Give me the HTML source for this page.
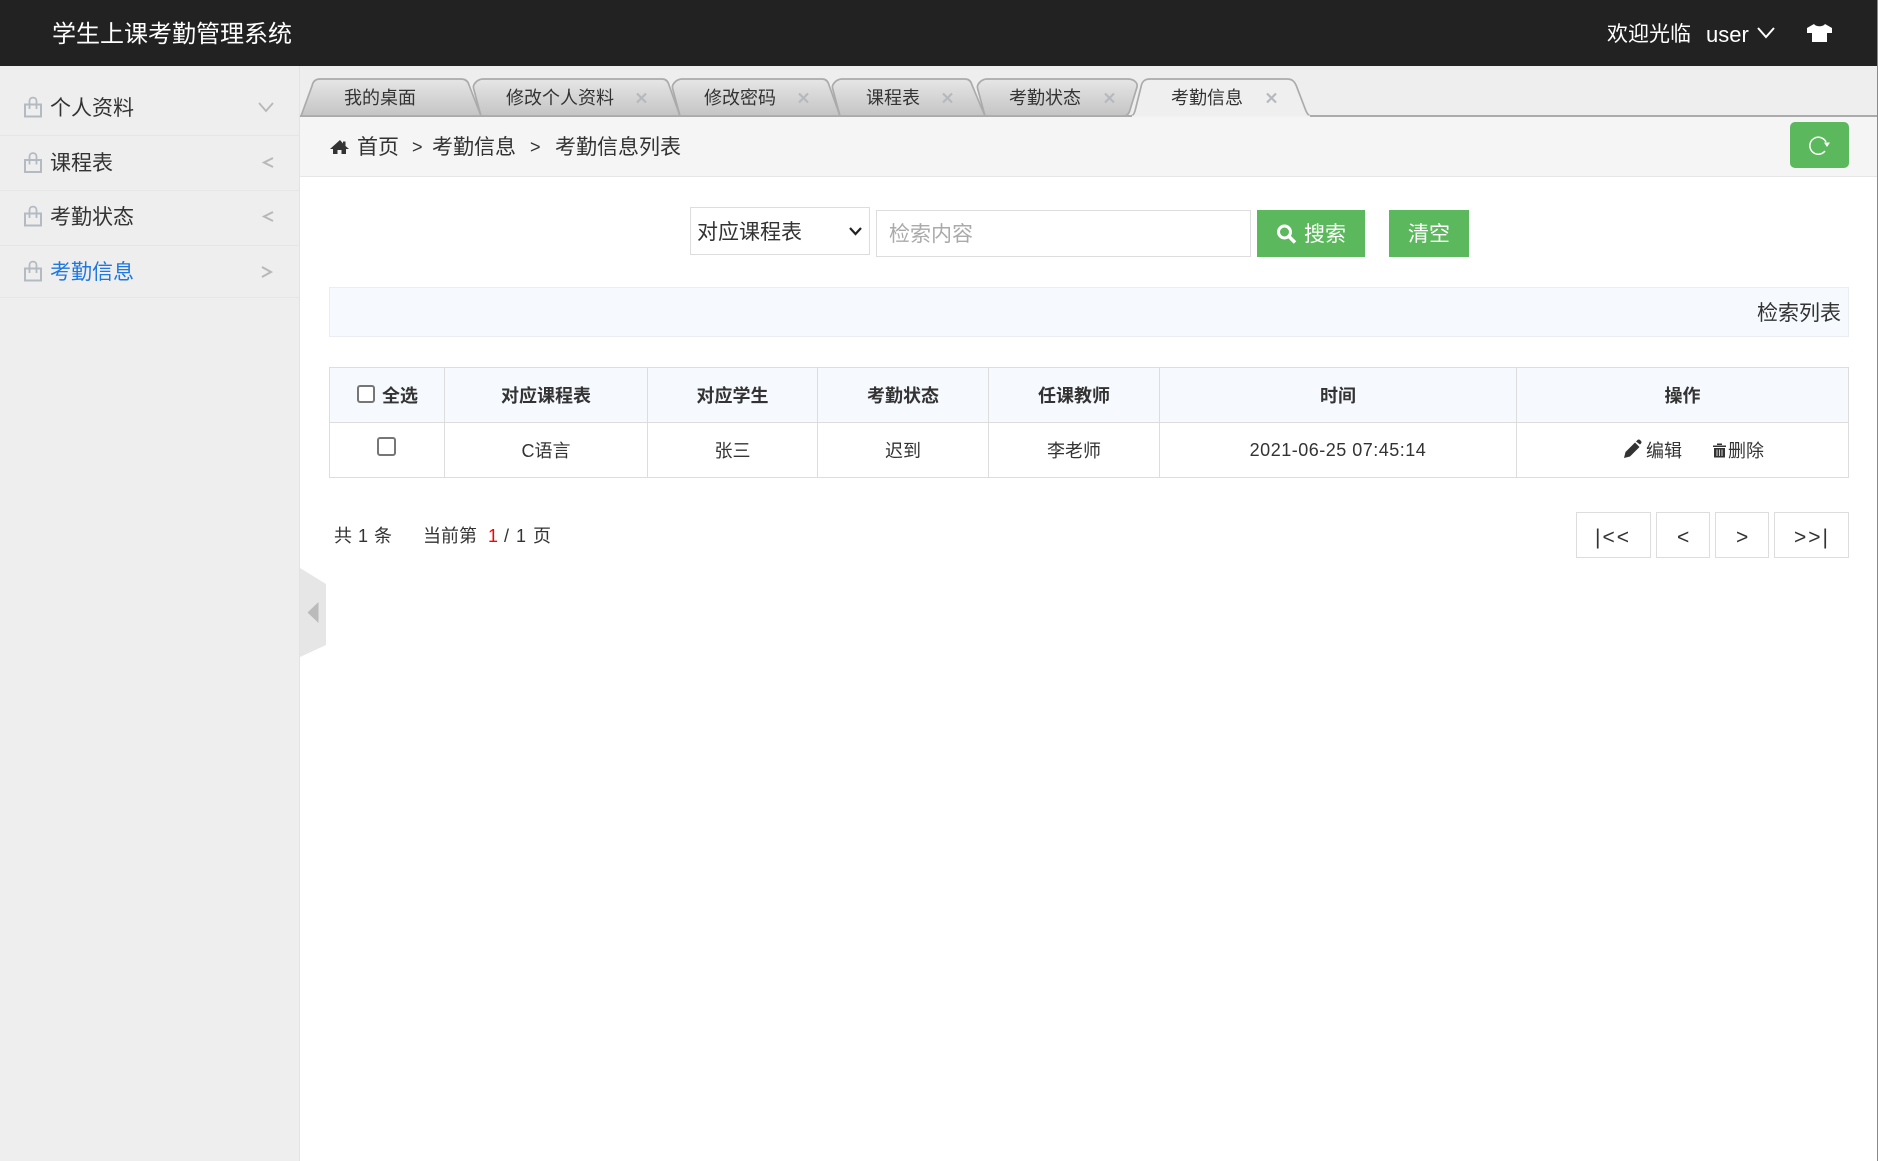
<!DOCTYPE html>
<html lang="zh">
<head>
<meta charset="utf-8">
<title>学生上课考勤管理系统</title>
<style>
html,body{margin:0;padding:0;background:#fff}
body{position:relative;width:1878px;height:1161px;overflow:hidden;font-family:"Liberation Sans","Noto Sans CJK SC",sans-serif;color:#333}
.b{position:absolute}
.t{position:absolute;white-space:nowrap;line-height:1}
.c{text-align:center}
.s18{font-size:18px}.s21{font-size:21px}
svg{position:absolute;left:0;top:0;overflow:visible}
.cb{position:absolute;box-sizing:border-box;border:2px solid #767676;border-radius:3px;background:#fff}
.pg{position:absolute;box-sizing:border-box;border:1px solid #ddd;top:512px;height:46px;background:#fff}
</style>
</head>
<body>
<div class="b" style="left:0;top:0;width:1878px;height:66px;background:#222"></div>
<div class="t" style="left:52px;top:23px;font-size:24px;color:#fff">学生上课考勤管理系统</div>
<div class="t s21" style="left:1607px;top:24px;color:#fff">欢迎光临</div>
<div class="t" style="left:1706px;top:24px;color:#fff;font-size:22px">user</div>

<div class="b" style="left:0;top:66px;width:299px;height:1095px;background:#eee;border-right:1px solid #e3e3e3"></div>
<div class="b" style="left:0;top:135px;width:299px;height:1px;background:#e6e6e6"></div>
<div class="b" style="left:0;top:190px;width:299px;height:1px;background:#e6e6e6"></div>
<div class="b" style="left:0;top:245px;width:299px;height:1px;background:#e6e6e6"></div>
<div class="b" style="left:0;top:297px;width:299px;height:1px;background:#e6e6e6"></div>
<div class="t s21" style="left:50px;top:98px">个人资料</div>
<div class="t s21" style="left:50px;top:153px">课程表</div>
<div class="t s21" style="left:50px;top:207px">考勤状态</div>
<div class="t s21" style="left:50px;top:262px;color:#1e78e0">考勤信息</div>

<div class="b" style="left:300px;top:66px;width:1578px;height:51px;background:#eeeeef"></div>
<div class="b" style="left:300px;top:117px;width:1578px;height:59px;background:#f5f5f5;border-bottom:1px solid #e6e6e6"></div>

<svg width="1878" height="1161" viewBox="0 0 1878 1161" fill="none">
<defs>
<linearGradient id="g" x1="0" y1="0" x2="0" y2="1"><stop offset="0" stop-color="#e6e6e6"/><stop offset="1" stop-color="#c4c4c4"/></linearGradient>
</defs>
<path d="M300 116H1878" stroke="#ababab" stroke-width="2"/>
<g fill="url(#g)" stroke="#ababab" stroke-width="1.700">
<path d="M301 116L312 86C313 81 316 79 320 79H461C465 79 468 81 469 85L481 116Z"/>
<path d="M481 116L474 90C473 87 473 85 476 82C478 80 480 79 483 79H662C666 79 668 81 669 85L680 116Z"/>
<path d="M680 116L673 90C672 87 672 85 675 82C677 80 679 79 682 79H822C826 79 828 81 829 85L840 116Z"/>
<path d="M840 116L833 90C832 87 832 85 835 82C837 80 839 79 842 79H965C969 79 971 81 972 85L985 116Z"/>
<path d="M985 116L978 90C977 87 977 85 980 82C982 80 984 79 987 79H1128C1133 79 1138 82 1137 87L1130 110C1129 114 1127 116 1123 116Z"/>
</g>
<path d="M1130 116C1133 116 1134 114 1135 111L1141 87C1142 81 1145 79 1150 79H1287C1292 79 1294 81 1296 85L1306 111C1308 115 1309 116 1312 116" fill="#efeff0" stroke="#ababab" stroke-width="1.700"/>
<rect x="1132" y="115.500" width="178" height="2" fill="#f2f2f3"/>

<path d="M25 104.500V116.500H41V104.500Z" stroke="#b4bac2" stroke-width="2"/><path d="M29.500 109V101C29.500 96.500 36.500 96.500 36.500 101V109" stroke="#b4bac2" stroke-width="1.800"/>
<path d="M25 160V172H41V160Z" stroke="#b4bac2" stroke-width="2"/><path d="M29.500 164.500V156.500C29.500 152 36.500 152 36.500 156.500V164.500" stroke="#b4bac2" stroke-width="1.800"/>
<path d="M25 213.500V225.500H41V213.500Z" stroke="#b4bac2" stroke-width="2"/><path d="M29.500 218V210C29.500 205.500 36.500 205.500 36.500 210V218" stroke="#b4bac2" stroke-width="1.800"/>
<path d="M25 268.500V280.500H41V268.500Z" stroke="#b4bac2" stroke-width="2"/><path d="M29.500 273V265C29.500 260.500 36.500 260.500 36.500 265V273" stroke="#b4bac2" stroke-width="1.800"/>

<path d="M259 103L266 111L273 103" stroke="#b8b8b8" stroke-width="1.800"/>
<path d="M273 158L264 162.500L273 167" stroke="#b8b8b8" stroke-width="2"/>
<path d="M273 212L264 216.500L273 221" stroke="#b8b8b8" stroke-width="2"/>
<path d="M262 267L271 272L262 277" stroke="#b8b8b8" stroke-width="2"/>

<path d="M1758 28L1766 37L1774 28" stroke="#fff" stroke-width="2"/>
<path d="M1814 24L1807 28V33H1812V42H1827V33H1832V28L1825 24C1823 27 1816 27 1814 24Z" fill="#fff"/>

<rect x="1790" y="122" width="59" height="46" rx="5" fill="#5cb85c"/>
<path d="M1825 151A8.500 8.500 0 1 1 1826 142" stroke="#fff" stroke-width="1.500"/>
<path d="M1824 142.500H1830L1827 147Z" fill="#fff"/>

<path d="M340 140L330 149H333V154H337.500V150H341.500V154H346V149H349L345.500 146V141.500H343V143.500Z" fill="#333"/>
<path d="M300 568L326 584V645L300 657Z" fill="#e6e6e6"/>
<path d="M318.500 602V623L307.500 612.500Z" fill="#bbb"/>

<path d="M850 228L855.500 234L861 228" stroke="#222" stroke-width="2.200"/>

<path d="M1624 458L1625.500 452L1635 442.500L1639.500 447L1630 456.500Z" fill="#333"/>
<path d="M1636 441.500L1637.500 440C1638.300 439.300 1639.300 439.300 1640 440L1641 441C1641.700 441.700 1641.700 442.700 1641 443.500L1640 444.500Z" fill="#333"/>
<path d="M1713 445.500H1726V447H1713ZM1717 443.500H1722V445H1717ZM1714 448H1725V457.500H1714Z" fill="#333"/>
<path d="M1717 449.500V456M1719.500 449.500V456M1722 449.500V456" stroke="#fff" stroke-width=".8"/>
</svg>

<div class="t s18" style="left:344px;top:89px">我的桌面</div>
<div class="t s18" style="left:506px;top:89px">修改个人资料</div>
<div class="t s18" style="left:704px;top:89px">修改密码</div>
<div class="t s18" style="left:866px;top:89px">课程表</div>
<div class="t s18" style="left:1009px;top:89px">考勤状态</div>
<div class="t s18" style="left:1171px;top:89px">考勤信息</div>
<svg width="1878" height="1161" viewBox="0 0 1878 1161" fill="none" stroke="#b5b8bd" stroke-width="2.200">
<path d="M637 93.500L646 102.500M646 93.500L637 102.500"/>
<path d="M799 93.500L808 102.500M808 93.500L799 102.500"/>
<path d="M943 93.500L952 102.500M952 93.500L943 102.500"/>
<path d="M1105 93.500L1114 102.500M1114 93.500L1105 102.500"/>
<path d="M1267 93.500L1276 102.500M1276 93.500L1267 102.500"/>
</svg>

<div class="t s21" style="left:357px;top:137px">首页</div>
<div class="t s18" style="left:412px;top:138px">&gt;</div>
<div class="t s21" style="left:432px;top:137px">考勤信息</div>
<div class="t s18" style="left:530px;top:138px">&gt;</div>
<div class="t s21" style="left:555px;top:137px">考勤信息列表</div>

<div class="b" style="left:690px;top:207px;width:180px;height:48px;box-sizing:border-box;border:1px solid #ddd"></div>
<div class="t s21" style="left:697px;top:222px">对应课程表</div>
<div class="b" style="left:876px;top:210px;width:375px;height:47px;box-sizing:border-box;border:1px solid #ddd"></div>
<div class="t s21" style="left:889px;top:224px;color:#aaa">检索内容</div>
<div class="b" style="left:1257px;top:210px;width:108px;height:47px;background:#5cb85c"></div>
<svg width="1878" height="1161" viewBox="0 0 1878 1161" fill="none">
<circle cx="1284.500" cy="232" r="6" stroke="#fff" stroke-width="3"/>
<path d="M1289 236.500L1295 242.500" stroke="#fff" stroke-width="3.500"/>
</svg>
<div class="t s21" style="left:1304px;top:224px;color:#fff">搜索</div>
<div class="b" style="left:1389px;top:210px;width:80px;height:47px;background:#5cb85c"></div>
<div class="t s21" style="left:1408px;top:224px;color:#fff">清空</div>

<div class="b" style="left:329px;top:287px;width:1520px;height:50px;box-sizing:border-box;background:#f6f9fd;border:1px solid #eaeef2"></div>
<div class="t s21" style="left:1757px;top:303px">检索列表</div>

<div class="b" style="left:329px;top:367px;width:1520px;height:56px;background:#f6f9fd"></div>
<div class="b" style="left:329px;top:367px;width:1520px;height:111px;box-sizing:border-box;border:1px solid #ddd"></div>
<div class="b" style="left:329px;top:422px;width:1520px;height:1px;background:#ddd"></div>
<div class="b" style="left:444px;top:367px;width:1px;height:111px;background:#ddd"></div>
<div class="b" style="left:647px;top:367px;width:1px;height:111px;background:#ddd"></div>
<div class="b" style="left:817px;top:367px;width:1px;height:111px;background:#ddd"></div>
<div class="b" style="left:988px;top:367px;width:1px;height:111px;background:#ddd"></div>
<div class="b" style="left:1159px;top:367px;width:1px;height:111px;background:#ddd"></div>
<div class="b" style="left:1516px;top:367px;width:1px;height:111px;background:#ddd"></div>

<div class="cb" style="left:357px;top:385px;width:18px;height:18px"></div>
<div class="t s18" style="left:382px;top:387px;font-weight:bold">全选</div>
<div class="t s18 c" style="left:445px;width:202px;top:387px;font-weight:bold">对应课程表</div>
<div class="t s18 c" style="left:648px;width:169px;top:387px;font-weight:bold">对应学生</div>
<div class="t s18 c" style="left:818px;width:170px;top:387px;font-weight:bold">考勤状态</div>
<div class="t s18 c" style="left:989px;width:170px;top:387px;font-weight:bold">任课教师</div>
<div class="t s18 c" style="left:1160px;width:356px;top:387px;font-weight:bold">时间</div>
<div class="t s18 c" style="left:1517px;width:331px;top:387px;font-weight:bold">操作</div>

<div class="cb" style="left:377px;top:437px;width:19px;height:19px"></div>
<div class="t s18 c" style="left:445px;width:202px;top:442px">C语言</div>
<div class="t s18 c" style="left:648px;width:169px;top:442px">张三</div>
<div class="t s18 c" style="left:818px;width:170px;top:442px">迟到</div>
<div class="t s18 c" style="left:989px;width:170px;top:442px">李老师</div>
<div class="t s18 c" style="left:1160px;width:356px;top:441px;letter-spacing:.5px">2021-06-25 07:45:14</div>
<div class="t s18" style="left:1646px;top:442px">编辑</div>
<div class="t s18" style="left:1728px;top:442px">删除</div>

<div class="t s18" style="left:334px;top:527px;word-spacing:1px">共 1 条</div>
<div class="t s18" style="left:423px;top:527px">当前第</div>
<div class="t s18" style="left:488px;top:527px;color:#f00">1</div>
<div class="t s18" style="left:504px;top:527px;word-spacing:2px">/ 1 页</div>

<div class="pg" style="left:1576px;width:75px"></div>
<div class="pg" style="left:1656px;width:54px"></div>
<div class="pg" style="left:1715px;width:54px"></div>
<div class="pg" style="left:1774px;width:75px"></div>
<div class="t s21" style="left:1595px;top:527px;letter-spacing:2px">|&lt;&lt;</div>
<div class="t s21" style="left:1677px;top:527px">&lt;</div>
<div class="t s21" style="left:1736px;top:527px">&gt;</div>
<div class="t s21" style="left:1794px;top:527px;letter-spacing:2px">&gt;&gt;|</div>

<div class="b" style="left:1877px;top:0;width:1px;height:1161px;background:#8a8a8a"></div>
</body>
</html>
